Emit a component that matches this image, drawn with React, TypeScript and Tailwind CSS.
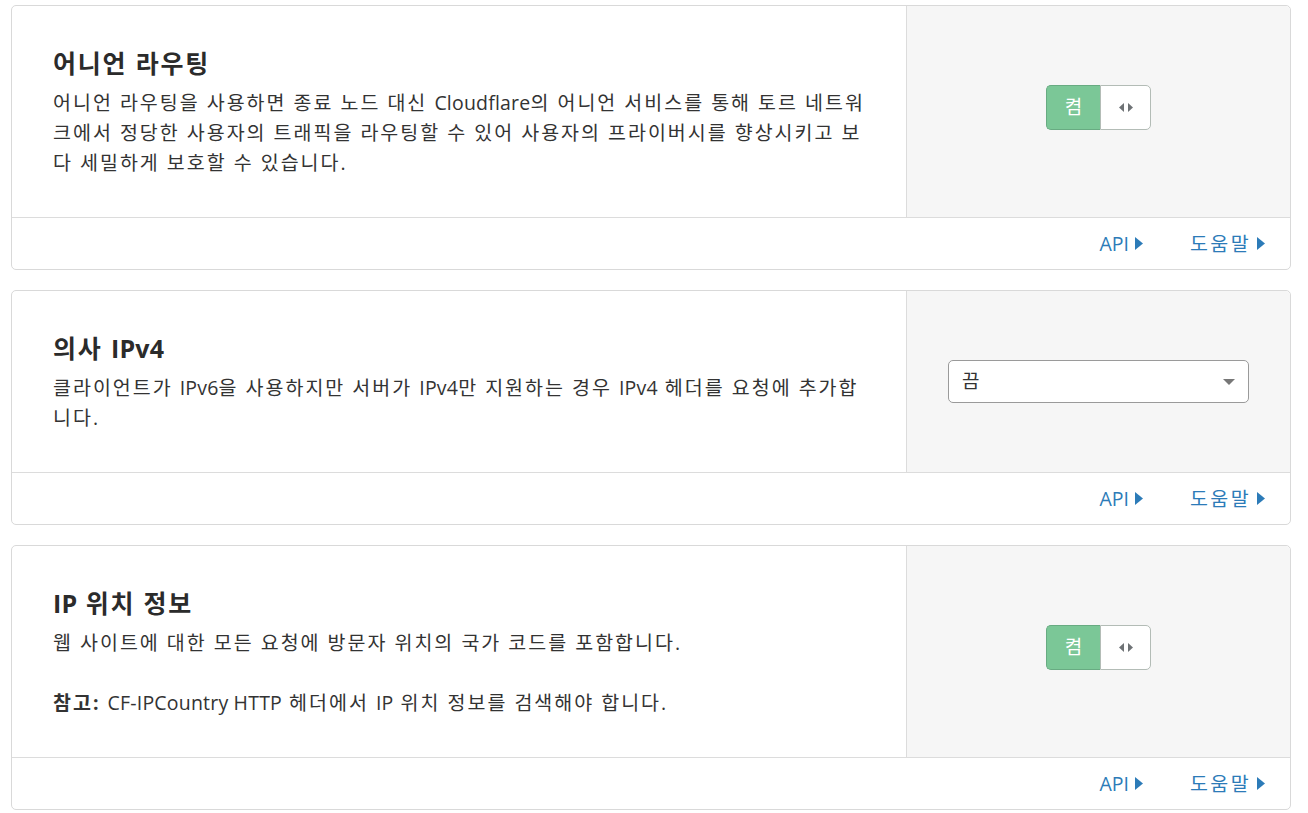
import React from 'react';

const font = { fontFamily: '"Open Sans", "Noto Sans CJK KR", sans-serif' };

// Hangul in the reference runs wider than Noto's, so Korean gets tracking and Latin runs keep theirs
const Ko: React.FC<{ text: string }> = ({ text }) => (
  <>
    {text.split(/([A-Za-z0-9\-]+(?:[ ][A-Za-z0-9\-]+)*)/).map((part, i) =>
      /[A-Za-z0-9]/.test(part) ? (
        <span key={i} className="tracking-[0.2px]">{part}</span>
      ) : (
        <React.Fragment key={i}>{part}</React.Fragment>
      )
    )}
  </>
);

const Caret: React.FC = () => (
  <svg width="8" height="13" viewBox="0 0 8 13" className="ml-[6px]">
    <path d="M0 0 L8 6.5 L0 13 Z" fill="currentColor" />
  </svg>
);

const Toggle: React.FC = () => (
  <div className="mb-[8px] flex h-[45px] w-[105px] rounded-[5px]">
    <div className="flex w-[54px] items-center justify-center rounded-l-[5px] border border-r-0 border-[#68ab82] bg-[#7bc797] text-[19px] text-white">
      켬
    </div>
    <div className="flex flex-1 items-center justify-center rounded-r-[5px] border border-[#b3bcb6] bg-white">
      <svg width="14" height="9" viewBox="0 0 14 9">
        <path d="M5 0 L0 4.5 L5 9 Z" fill="#6e7275" />
        <path d="M9 0 L14 4.5 L9 9 Z" fill="#6e7275" />
      </svg>
    </div>
  </div>
);

const Select: React.FC = () => (
  <div className="flex h-[43px] w-[301px] items-center justify-between rounded-[5px] border border-[#9a9a9a] bg-white pl-[13px] pr-[13px] text-[19px] text-[#333]">
    <span>끔</span>
    <svg width="12" height="6" viewBox="0 0 12 6">
      <path d="M0 0 L12 0 L6 6 Z" fill="#777" />
    </svg>
  </div>
);

interface CardProps {
  title: string;
  children: React.ReactNode;
  control: React.ReactNode;
}

const SettingCard: React.FC<CardProps> = ({ title, children, control }) => (
  <div className="w-[1280px] rounded-[5px] border border-[#d9d9d9] bg-white">
    <div className="flex">
      <div className="w-[894px] pl-[41px] pr-[28px] pt-[42px] pb-[39px]">
        <h3 className="mb-[10px] text-[25px] leading-[30px] font-bold tracking-[1.8px] text-[#2b2b2b]">
          <Ko text={title} />
        </h3>
        <div className="text-[19.5px] leading-[30px] tracking-[2px] text-[#333]">{children}</div>
      </div>
      <div className="flex flex-1 items-center justify-center rounded-tr-[5px] border-l border-[#dcdcdc] bg-[#f6f6f6]">
        {control}
      </div>
    </div>
    <div className="flex h-[52px] items-center justify-end border-t border-[#dcdcdc] pr-[25px] text-[19.5px] text-[#2c7bb8]">
      <a className="flex items-center">API<Caret /></a>
      <a className="ml-[47px] flex items-center tracking-[2.4px]">도움말<Caret /></a>
    </div>
  </div>
);

const App: React.FC = () => {
  return (
    <div className="min-h-screen bg-white pl-[11px] pt-[5px]" style={font}>
      <div className="flex flex-col gap-[20px]">
        <SettingCard title="어니언 라우팅" control={<Toggle />}>
          <Ko text="어니언 라우팅을 사용하면 종료 노드 대신 Cloudflare의 어니언 서비스를 통해 토르 네트워크에서 정당한 사용자의 트래픽을 라우팅할 수 있어 사용자의 프라이버시를 향상시키고 보다 세밀하게 보호할 수 있습니다." />
        </SettingCard>
        <SettingCard title="의사 IPv4" control={<Select />}>
          <Ko text="클라이언트가 IPv6을 사용하지만 서버가 IPv4만 지원하는 경우 IPv4 헤더를 요청에 추가합니다." />
        </SettingCard>
        <SettingCard title="IP 위치 정보" control={<Toggle />}>
          <p className="mb-[30px]">
            <Ko text="웹 사이트에 대한 모든 요청에 방문자 위치의 국가 코드를 포함합니다." />
          </p>
          <p>
            <strong className="font-bold">참고:</strong> <Ko text="CF-IPCountry HTTP 헤더에서 IP 위치 정보를 검색해야 합니다." />
          </p>
        </SettingCard>
      </div>
    </div>
  );
};

export default App;
